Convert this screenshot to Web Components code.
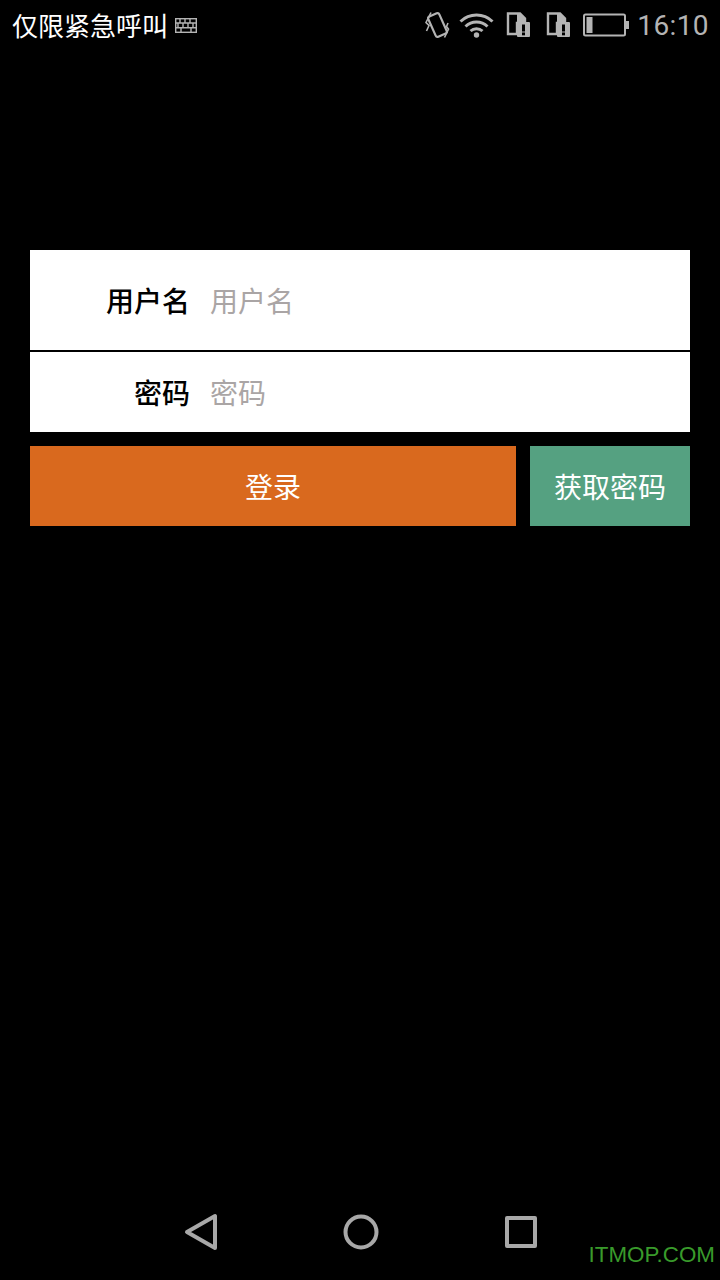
<!DOCTYPE html>
<html lang="zh">
<head>
<meta charset="utf-8">
<title>登录</title>
<style>
html, body { margin: 0; height: 100%; background: #000; }
body { font-family: "Roboto", "Noto Sans CJK SC", sans-serif; }
</style>
</head>
<body>
<app-screen>
    <status-bar slot="status" carrier="仅限紧急呼叫" time="16:10"></status-bar>
    <login-form>
        <form-field label="用户名" placeholder="用户名" style="--row-height: 100px"></form-field>
        <form-field label="密码" placeholder="密码" style="--row-height: 80px"></form-field>
        <action-button slot="actions" grow style="--bg: #d9691e">登录</action-button>
        <action-button slot="actions" style="--bg: #55a181">获取密码</action-button>
    </login-form>
    <nav-bar slot="nav"></nav-bar>
</app-screen>

<script>
class AppScreen extends HTMLElement {
    constructor() {
        super();
        this.attachShadow({ mode: 'open' }).innerHTML = `
            <style>
            :host {
                background: #000;
                display: flex;
                flex-direction: column;
                height: 1280px;
                overflow: hidden;
                position: relative;
                width: 720px;
            }
            main { flex: 1; padding: 200px 30px 0; }
            .mark {
                bottom: 12px;
                color: #399a2b;
                font: 22.4px "Liberation Sans", sans-serif;
                position: absolute;
                right: 5px;
            }
            </style>
            <slot name="status"></slot>
            <main><slot></slot></main>
            <slot name="nav"></slot>
            <div class="mark">ITMOP.COM</div>
        `;
    }
}

class StatusBar extends HTMLElement {
    constructor() {
        super();
        this.attachShadow({ mode: 'open' }).innerHTML = `
            <style>
            :host {
                align-items: center;
                display: flex;
                height: 50px;
                padding: 0 11px 0 12px;
            }
            .carrier {
                color: #fff;
                font: 26px/50px "Noto Sans CJK SC", sans-serif;
                margin-right: 7px;
            }
            .icons { align-items: center; display: flex; margin-left: auto; }
            svg { display: block; flex: none; }
            .time {
                color: #b4b4b4;
                font: 28px/50px Roboto, sans-serif;
                letter-spacing: .4px;
                margin: 2px 0 0 8px;
            }
            </style>
            <span class="carrier"></span>
            <svg width="22" height="15" viewBox="0 0 22 15" fill="none" stroke="#b4b4b4" stroke-width="1.4">
                <rect x=".7" y=".7" width="20.6" height="13.6"/>
                <path d="M1 5h20M1 9.700h20M5 1v4M10 1v4M15 1v4M3 5v5M8 5v5M13 5v5M18 5v5M6 10v4M16 10v4"/>
            </svg>
            <div class="icons">
                <svg width="26" height="28" viewBox="0 0 26 28" fill="none" stroke="#b4b4b4" style="margin-right:9px">
                    <rect x="7.500" y="3" width="12" height="22" rx="2" transform="rotate(-24 13.500 14)" stroke-width="2.200"/>
                    <path d="M7 1.500 2 11.500l3 3-2.500 5.500M20.500 26.500l4-8.500-2-2.500 1.500-3.500" stroke-width="1.600"/>
                </svg>
                <svg width="35" height="26" viewBox="0 0 35 26" fill="none" stroke="#b4b4b4" stroke-width="3" style="margin-right:12px">
                    <path d="M1.500 9.500a23 23 0 0 1 32 0M6.500 14.500a16 16 0 0 1 22 0M11.500 19a9 9 0 0 1 12 0"/>
                    <circle cx="17.500" cy="23" r="2.700" fill="#b4b4b4" stroke="none"/>
                </svg>
                <sim-alert style="margin-right:16px"></sim-alert>
                <sim-alert style="margin-right:13px"></sim-alert>
                <svg width="46" height="24" viewBox="0 0 46 24" fill="none">
                    <rect x="1" y="1.500" width="41" height="21" rx="1.500" stroke="#b4b4b4" stroke-width="2"/>
                    <rect x="43" y="8" width="3" height="8" fill="#b4b4b4"/>
                    <rect x="3.500" y="4" width="6" height="16" fill="#b4b4b4"/>
                </svg>
                <span class="time"></span>
            </div>
        `;
    }

    connectedCallback() {
        this.shadowRoot.querySelector('.carrier').textContent = this.getAttribute('carrier');
        this.shadowRoot.querySelector('.time').textContent = this.getAttribute('time');
    }
}

class SimAlert extends HTMLElement {
    constructor() {
        super();
        this.attachShadow({ mode: 'open' }).innerHTML = `
            <style>
            :host { display: block; flex: none; height: 26px; width: 24px; }
            svg { display: block; }
            </style>
            <svg width="24" height="26" viewBox="0 0 24 26">
                <path d="M2 1.500h12l5 5V11h-8v11H2z" fill="none" stroke="#b4b4b4" stroke-width="2.400"/>
                <path d="M11 1h3l6 6v3h-9z" fill="#b4b4b4"/>
                <rect x="11" y="10" width="13" height="15" rx="1" fill="#b4b4b4"/>
                <rect x="16" y="12.500" width="3" height="7" fill="#000"/>
                <rect x="16" y="20.500" width="3" height="2.800" fill="#000"/>
            </svg>
        `;
    }
}

class LoginForm extends HTMLElement {
    constructor() {
        super();
        this.attachShadow({ mode: 'open' }).innerHTML = `
            <style>
            :host { display: block; }
            .fields { display: flex; flex-direction: column; gap: 2px; }
            .actions { display: flex; gap: 14px; margin-top: 14px; }
            </style>
            <div class="fields"><slot></slot></div>
            <div class="actions"><slot name="actions"></slot></div>
        `;
    }
}

class FormField extends HTMLElement {
    constructor() {
        super();
        this.attachShadow({ mode: 'open' }).innerHTML = `
            <style>
            :host {
                align-items: center;
                background: #fff;
                display: flex;
                font: 28px "Noto Sans CJK SC", sans-serif;
                height: var(--row-height);
            }
            .label { color: #000; font-weight: 500; text-align: right; width: 160px; }
            .placeholder { color: #aaa5a5; margin-left: 20px; }
            </style>
            <span class="label"></span>
            <span class="placeholder"></span>
        `;
    }

    connectedCallback() {
        this.shadowRoot.querySelector('.label').textContent = this.getAttribute('label');
        this.shadowRoot.querySelector('.placeholder').textContent = this.getAttribute('placeholder');
    }
}

class ActionButton extends HTMLElement {
    constructor() {
        super();
        this.attachShadow({ mode: 'open' }).innerHTML = `
            <style>
            :host {
                align-items: center;
                background: var(--bg);
                color: #fff;
                display: flex;
                flex: none;
                font: 28px "Noto Sans CJK SC", sans-serif;
                height: 80px;
                justify-content: center;
                width: 160px;
            }
            :host([grow]) { flex: 1; width: auto; }
            </style>
            <slot></slot>
        `;
    }
}

class NavBar extends HTMLElement {
    constructor() {
        super();
        this.attachShadow({ mode: 'open' }).innerHTML = `
            <style>
            :host {
                align-items: center;
                display: flex;
                height: 96px;
                justify-content: center;
                padding-left: 1px;
            }
            .keys { align-items: center; display: flex; gap: 125px; }
            svg { display: block; }
            </style>
            <div class="keys">
                <svg width="34" height="38" viewBox="0 0 34 38" fill="none" stroke="#a8a8a8" stroke-width="4" stroke-linejoin="round">
                    <path d="M3 19 31 3v32z"/>
                </svg>
                <svg width="36" height="36" viewBox="0 0 36 36" fill="none" stroke="#a8a8a8" stroke-width="4">
                    <circle cx="18" cy="18" r="15.500"/>
                </svg>
                <svg width="32" height="32" viewBox="0 0 32 32" fill="none" stroke="#a8a8a8" stroke-width="4" stroke-linejoin="round" style="margin-left:1px">
                    <rect x="2" y="2" width="28" height="28"/>
                </svg>
            </div>
        `;
    }
}

customElements.define('app-screen', AppScreen);
customElements.define('status-bar', StatusBar);
customElements.define('sim-alert', SimAlert);
customElements.define('login-form', LoginForm);
customElements.define('form-field', FormField);
customElements.define('action-button', ActionButton);
customElements.define('nav-bar', NavBar);
</script>
</body>
</html>
